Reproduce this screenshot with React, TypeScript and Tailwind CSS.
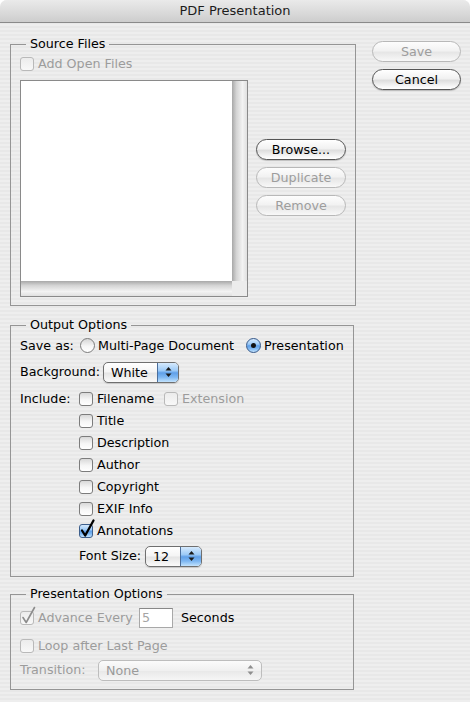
import clsx from "clsx";

const aquaBlue =
  "bg-[image:linear-gradient(to_bottom,#d6eafd_0%,#9ccaf7_40%,#5f9fe8_52%,#7fb8f2_75%,#c3e3fd_100%)]";

function Checkbox({ checked = false, disabled = false }: { checked?: boolean; disabled?: boolean }) {
  return (
    <span
      className={clsx(
        "relative inline-block h-[14px] w-[14px] shrink-0 rounded-[3px] border",
        checked && !disabled
          ? clsx("border-[#3d5f8c]", aquaBlue)
          : disabled
            ? "border-[#b9b9b9] bg-[image:linear-gradient(to_bottom,#ececec,#f8f8f8)]"
            : "border-[#7c7c7c] bg-[image:linear-gradient(to_bottom,#d9d9d9,#f6f6f6_55%,#ffffff)]"
      )}
    >
      {checked && (
        <svg className="absolute left-[0px] top-[-6px] overflow-visible" width="15" height="19" viewBox="0 0 15 19">
          <path
            d="M2 11.5 L5.2 16.5 L13.5 1.5"
            fill="none"
            stroke={disabled ? "#8c8c8c" : "#000"}
            strokeWidth={disabled ? 1.6 : 2.3}
            strokeLinecap="round"
            strokeLinejoin="round"
          />
        </svg>
      )}
    </span>
  );
}

function Radio({ selected = false }: { selected?: boolean }) {
  return (
    <span
      className={clsx(
        "flex h-[15px] w-[15px] shrink-0 items-center justify-center rounded-full border",
        selected
          ? clsx("border-[#35588a]", aquaBlue)
          : "border-[#7c7c7c] bg-[image:linear-gradient(to_bottom,#d6d6d6,#f6f6f6_55%,#ffffff)]"
      )}
    >
      {selected && <span className="h-[5px] w-[5px] rounded-full bg-[#111]" />}
    </span>
  );
}

function Arrows({ color }: { color: string }) {
  return (
    <svg width="7" height="12" viewBox="0 0 7 12">
      <path d="M3.5 1 L6.5 4.5 L0.5 4.5 Z" fill={color} />
      <path d="M3.5 11 L6.5 7.5 L0.5 7.5 Z" fill={color} />
    </svg>
  );
}

function Popup({ label, width, disabled = false }: { label: string; width: string; disabled?: boolean }) {
  return (
    <div
      className={clsx(
        "flex h-[21px] shrink-0 overflow-hidden rounded-[5px] border",
        width,
        disabled
          ? "border-[#bdbdbd] bg-[image:linear-gradient(to_bottom,#fbfbfb,#f0f0f0_50%,#e8e8e8_52%,#f6f6f6)]"
          : "border-[#6f6f6f] bg-[image:linear-gradient(to_bottom,#ffffff,#f4f4f4_48%,#e4e4e4_52%,#fafafa)] shadow-[0_1px_1px_rgba(0,0,0,0.15)]"
      )}
    >
      <span className={clsx("flex-1 pl-[7px] leading-[19px]", disabled ? "text-[#9a9a9a]" : "text-black")}>{label}</span>
      <span
        className={clsx(
          "flex w-[21px] items-center justify-center",
          disabled ? "" : clsx("border-l border-[#4a6e9c]", aquaBlue)
        )}
      >
        <Arrows color={disabled ? "#8e8e8e" : "#1a1a1a"} />
      </span>
    </div>
  );
}

function PushButton({ label, disabled = false, width = "w-[90px]" }: { label: string; disabled?: boolean; width?: string }) {
  return (
    <div
      className={clsx(
        "flex h-[21px] items-center justify-center rounded-full border",
        width,
        disabled
          ? "border-[#b8b8b8] bg-[image:linear-gradient(to_bottom,#fdfdfd,#f2f2f2_45%,#e6e6e6_55%,#f8f8f8)] text-[#9d9d9d]"
          : "border-[#555] bg-[image:linear-gradient(to_bottom,#ffffff,#f1f1f1_45%,#dedede_55%,#f6f6f6_85%,#ffffff)] text-black shadow-[0_1px_1px_rgba(0,0,0,0.2)]"
      )}
    >
      {label}
    </div>
  );
}

function Row({ children, className }: { children: React.ReactNode; className?: string }) {
  return <div className={clsx("flex h-[22px] items-center", className)}>{children}</div>;
}

function Group({ title, children, className }: { title: string; children: React.ReactNode; className?: string }) {
  return (
    <fieldset className={clsx("w-[344px] border border-[#959595] pl-[9px] pr-[9px]", className)}>
      <legend className="ml-[6px] px-[4px] leading-[16px]">{title}</legend>
      {children}
    </fieldset>
  );
}

export default function App() {
  return (
    <div className="h-[702px] w-[470px] overflow-hidden rounded-t-[7px] bg-[image:repeating-linear-gradient(to_bottom,#eeeeee_0px,#eeeeee_2px,#e8e8e8_2px,#e8e8e8_4px)] font-['DejaVu_Sans',sans-serif] text-[12.7px] text-black">
      <div className="flex h-[23px] items-center justify-center border-b border-[#8a8a8a] bg-[image:linear-gradient(to_bottom,#eaeaea,#dcdcdc_50%,#cdcdcd)] text-[13px] text-[#1c1c1c]">
        PDF Presentation
      </div>

      <div className="flex pl-[10px]">
        <div className="flex flex-col">
          <Group title="Source Files" className="mt-[13px] pt-[4px] pb-[8px]">
            <div className="flex h-[16px] items-center gap-[4px] text-[#9c9c9c]">
              <Checkbox disabled />
              Add Open Files
            </div>
            <div className="mt-[8px] flex">
              <div className="flex h-[217px] w-[228px] flex-col border border-[#8a8a8a]">
                <div className="flex flex-1">
                  <div className="flex-1 bg-white" />
                  <div className="w-[15px] bg-[image:linear-gradient(to_right,#a8a8a8,#d4d4d4_30%,#f3f3f3_70%,#e0e0e0)]" />
                </div>
                <div className="flex h-[15px]">
                  <div className="flex-1 bg-[image:linear-gradient(to_bottom,#a8a8a8,#d4d4d4_30%,#f3f3f3_70%,#e0e0e0)]" />
                  <div className="w-[15px] bg-[#ececec]" />
                </div>
              </div>
              <div className="ml-[8px] flex flex-col gap-[7px] pt-[59px]">
                <PushButton label="Browse..." />
                <PushButton label="Duplicate" disabled />
                <PushButton label="Remove" disabled />
              </div>
            </div>
          </Group>

          <Group title="Output Options" className="mt-[11px] pt-[2px] pb-[9px]">
            <Row>
              <span className="w-[60px]">Save as:</span>
              <span className="flex w-[166px] items-center gap-[3px]">
                <Radio />
                Multi-Page Document
              </span>
              <span className="flex items-center gap-[3px]">
                <Radio selected />
                Presentation
              </span>
            </Row>
            <Row className="mt-[4px]">
              <span className="w-[83px]">Background:</span>
              <Popup label="White" width="w-[76px]" />
            </Row>
            <div className="mt-[5px] flex">
              <span className="w-[59px] leading-[22px]">Include:</span>
              <div className="flex flex-col">
                <Row>
                  <span className="flex w-[85px] items-center gap-[4px]">
                    <Checkbox />
                    Filename
                  </span>
                  <span className="flex items-center gap-[4px] text-[#9c9c9c]">
                    <Checkbox disabled />
                    Extension
                  </span>
                </Row>
                {["Title", "Description", "Author", "Copyright", "EXIF Info"].map((t) => (
                  <Row key={t} className="gap-[4px]">
                    <Checkbox />
                    {t}
                  </Row>
                ))}
                <Row className="gap-[4px]">
                  <Checkbox checked />
                  Annotations
                </Row>
                <Row className="mt-[3px]">
                  <span className="w-[66px]">Font Size:</span>
                  <Popup label="12" width="w-[57px]" />
                </Row>
              </div>
            </div>
          </Group>

          <Group title="Presentation Options" className="mt-[9px] pt-[5px] pb-[8px]">
            <Row>
              <span className="flex w-[119px] items-center gap-[4px] text-[#9c9c9c]">
                <Checkbox checked disabled />
                Advance Every
              </span>
              <span className="h-[20px] w-[34px] border border-[#a8a8a8] border-t-[#888] bg-white pl-[2px] leading-[18px] text-[#a5a5a5]">
                5
              </span>
              <span className="ml-[8px]">Seconds</span>
            </Row>
            <Row className="mt-[6px] gap-[4px] text-[#9c9c9c]">
              <Checkbox disabled />
              Loop after Last Page
            </Row>
            <Row className="mt-[2px]">
              <span className="w-[78px] text-[#9c9c9c]">Transition:</span>
              <Popup label="None" width="w-[164px]" disabled />
            </Row>
          </Group>
        </div>

        <div className="ml-[16px] flex flex-col gap-[7px] pt-[18px]">
          <PushButton label="Save" disabled width="w-[89px]" />
          <PushButton label="Cancel" width="w-[89px]" />
        </div>
      </div>
    </div>
  );
}
